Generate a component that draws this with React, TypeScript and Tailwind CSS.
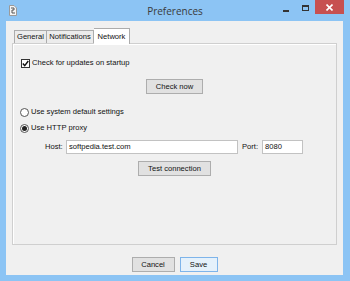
import React from 'react';

const font = { fontFamily: '"Liberation Sans", Arial, sans-serif' };

function Btn({ label, primary, w }: { label: string; primary?: boolean; w: string }) {
    return (
        <div
            className={
                'h-[15px] flex items-center justify-center border text-[7.6px] text-[#111] ' +
                w +
                (primary ? ' bg-[#e5f1fb] border-[#7eb4ea]' : ' bg-[#e1e1e1] border-[#adadad]')
            }
        >
            {label}
        </div>
    );
}

function Radio({ checked }: { checked?: boolean }) {
    return (
        <div className="w-[9px] h-[9px] rounded-full border border-[#555] bg-white flex items-center justify-center shrink-0">
            {checked && <div className="w-[5px] h-[5px] rounded-full bg-[#222]" />}
        </div>
    );
}

export default function App() {
    return (
        <div className="w-[350px] h-[281px] bg-[#8cc4f4] flex flex-col" style={font}>
            {/* Title bar */}
            <div className="h-[21px] relative flex items-start">
                <svg className="absolute left-[9px] top-[5px]" width="8" height="11" viewBox="0 0 8 11">
                    <path d="M0.5 0.5 L5 0.5 L7.5 3 L7.5 10.5 L0.5 10.5 Z" fill="#f4f4f4" stroke="#9a9a9a" />
                    <path d="M2 3 L5 3 L5 5 L3 5 L3 8 L6 8" stroke="#555" strokeWidth="1" fill="none" />
                </svg>
                <div
                    className="w-full text-center text-[10px] leading-none pt-[6px] text-[#3a3a3a]"
                    style={{ fontFamily: '"Open Sans", "Noto Sans", sans-serif' }}
                >
                    Preferences
                </div>
                <div className="absolute left-[283px] top-[10px] w-[6px] h-[2px] bg-[#333]" />
                <div className="absolute left-[302px] top-[5px] w-[7px] h-[6px] border border-[#333] border-t-2" />
                <div className="absolute left-[315px] top-0 w-[29px] h-[14px] bg-[#c75050] flex items-center justify-center">
                    <svg width="7" height="7" viewBox="0 0 7 7">
                        <path d="M0.5 0.5 L6.5 6.5 M6.5 0.5 L0.5 6.5" stroke="#fff" strokeWidth="1.6" />
                    </svg>
                </div>
            </div>

            {/* Client area */}
            <div className="ml-[6px] w-[337px] h-[254px] bg-[#f0f0f0] flex flex-col px-[6px] pt-[7px]">
                {/* Tabs */}
                <div className="h-[15px] flex items-end pl-[2px] text-[7.6px] text-[#111] relative z-10">
                    <div className="h-[13px] w-[33px] flex items-center justify-center border border-b-0 border-[#acacac] bg-[#ececec]">
                        General
                    </div>
                    <div className="h-[13px] w-[47px] flex items-center justify-center border border-b-0 border-l-0 border-[#acacac] bg-[#ececec]">
                        Notifications
                    </div>
                    <div className="h-[16px] -mb-[1px] w-[36px] flex items-center justify-center border border-b-0 border-l-0 border-[#acacac] bg-white">
                        Network
                    </div>
                </div>

                {/* Panel */}
                <div className="w-[325px] h-[202px] border border-[#cfcfcf] shadow-[inset_1px_1px_0_#fff] flex flex-col text-[7.6px] text-[#111]">
                    <div className="mt-[13px] h-[12px] pl-[8px] flex items-center gap-[2px]">
                        <div className="w-[9px] h-[9px] border border-[#333] bg-white flex items-center justify-center shrink-0">
                            <svg width="7" height="7" viewBox="0 0 7 7">
                                <path d="M0.8 3.6 L2.7 5.6 L6.3 1" stroke="#111" strokeWidth="1.4" fill="none" />
                            </svg>
                        </div>
                        <span>Check for updates on startup</span>
                    </div>

                    <div className="mt-[10px] flex justify-center">
                        <Btn label="Check now" w="w-[57px] h-[14px]" />
                    </div>

                    <div className="mt-[12px] h-[12px] pl-[7px] flex items-center gap-[2px]">
                        <Radio />
                        <span>Use system default settings</span>
                    </div>
                    <div className="mt-[4px] h-[12px] pl-[7px] flex items-center gap-[2px]">
                        <Radio checked />
                        <span>Use HTTP proxy</span>
                    </div>

                    <div className="mt-[6px] h-[14px] pl-[32px] flex items-center">
                        <span className="w-[21px]">Host:</span>
                        <div className="w-[172px] h-[14px] bg-white border border-[#c2c2c2] flex items-center pl-[2px]">
                            softpedia.test.com
                        </div>
                        <span className="ml-[4px] w-[20px]">Port:</span>
                        <div className="w-[41px] h-[14px] bg-white border border-[#c2c2c2] flex items-center pl-[2px]">
                            8080
                        </div>
                    </div>

                    <div className="mt-[7px] flex justify-center">
                        <Btn label="Test connection" w="w-[73px] h-[14px]" />
                    </div>
                </div>

                {/* Footer buttons */}
                <div className="mt-[12px] flex justify-center gap-[5px]">
                    <Btn label="Cancel" w="w-[43px]" />
                    <Btn label="Save" primary w="w-[38px]" />
                </div>
            </div>
        </div>
    );
}
